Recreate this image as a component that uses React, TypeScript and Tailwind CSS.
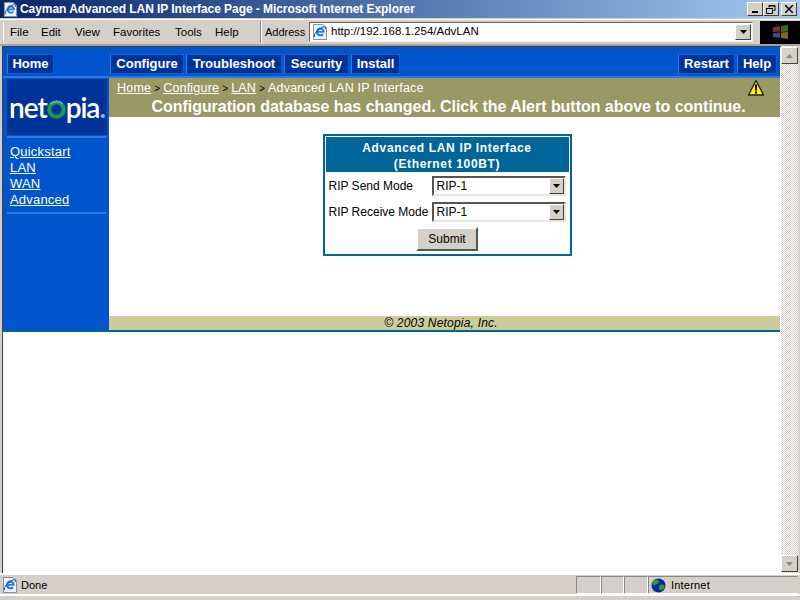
const ui = { fontFamily: 'Tahoma, "DejaVu Sans", sans-serif' }

function IeIcon({ size = 16 }: { size?: number }) {
  return (
    <svg width={size} height={size} viewBox="0 0 16 16" className="shrink-0">
      <path d="M1.500 .5h9l4 3v12h-13z" fill="#eef2f8" stroke="#7f8fb0" strokeWidth="1" />
      <path d="M8 3.500a4.600 4.600 0 0 1 4.600 5.300H6.400c.2 1.700 2.800 2.100 4.800.8v2.100c-3.400 1.500-7.200.2-7.200-3.400C4 5.700 5.800 3.500 8 3.500z" fill="#2a7ad8" />
      <path d="M6.400 7h3.800C10 5.400 6.800 5.300 6.400 7z" fill="#eef2f8" />
      <path d="M2.800 13c-2-2 3-8 8.200-10 2.500-.8 3.200.6 2 2.200" fill="none" stroke="#11489a" strokeWidth="1" />
    </svg>
  )
}

function CaptionButton({ children }: { children: React.ReactNode }) {
  return (
    <div className="w-4 h-[14px] bg-[#d4d0c8] border border-t-white border-l-white border-r-[#404040] border-b-[#404040] flex items-center justify-center">
      {children}
    </div>
  )
}

function DropArrow({ color = '#000' }: { color?: string }) {
  return (
    <svg width="7" height="4" viewBox="0 0 7 4">
      <path d="M0 0h7L3.500 4z" fill={color} />
    </svg>
  )
}

function SelectBox({ value }: { value: string }) {
  return (
    <div className="w-[134px] h-[20px] bg-white border-2 border-t-[#555] border-l-[#555] border-r-[#e8e6e0] border-b-[#e8e6e0] flex items-center justify-between">
      <span className="pl-[3px] text-[12px] text-black">{value}</span>
      <div className="w-[15px] h-[16px] bg-[#d4d0c8] border border-t-white border-l-white border-r-[#404040] border-b-[#404040] flex items-center justify-center">
        <DropArrow />
      </div>
    </div>
  )
}

function NavButton({ label, width }: { label: string; width: string }) {
  return (
    <div className={`h-[20px] ${width} bg-[#003399] border border-t-[#0a5fd0] border-l-[#2a7fe0] border-b-[#0a5fd0] border-r-[#0a5fd0] flex items-center justify-center text-white font-bold text-[13px]`}>
      {label}
    </div>
  )
}

function StatusCell({ width }: { width: string }) {
  return <div className={`${width} h-[18px] border border-t-[#888] border-l-[#888] border-r-white border-b-white`} />
}

export default function App() {
  return (
    <div className="w-[800px] h-[600px] overflow-hidden flex flex-col bg-[#d4d0c8]" style={ui}>
      {/* title bar */}
      <div className="h-[18px] shrink-0 bg-gradient-to-r from-[#0a246a] to-[#a6caf0] flex items-center pl-[3px] pr-[3px]">
        <IeIcon size={15} />
        <span className="ml-[2px] text-white font-bold text-[12px] tracking-[-0.06px] whitespace-nowrap" style={{ fontFamily: '"Liberation Sans", sans-serif' }}>
          Cayman Advanced LAN IP Interface Page - Microsoft Internet Explorer
        </span>
        <div className="ml-auto flex items-center">
          <CaptionButton>
            <div className="w-[6px] h-[2px] bg-black mt-[6px] -ml-[1px]" />
          </CaptionButton>
          <CaptionButton>
            <svg width="10" height="9" viewBox="0 0 10 9" fill="none" stroke="#000">
              <path d="M3 2.500V.5h6v5H7.500" strokeWidth="1" />
              <path d="M.5 3.500h6v5h-6z" strokeWidth="1" />
              <path d="M0 3.500h7M3 1h6" strokeWidth="1" />
            </svg>
          </CaptionButton>
          <div className="ml-[2px]">
            <CaptionButton>
              <svg width="8" height="8" viewBox="0 0 8 8" stroke="#000" strokeWidth="1.5">
                <path d="M0 0l8 8M8 0L0 8" />
              </svg>
            </CaptionButton>
          </div>
        </div>
      </div>

      {/* menu + address bar */}
      <div className="h-[27px] shrink-0 mt-[1px] border-t border-white border-b-2 border-b-[#a8a49c] flex items-center text-[11.5px] text-black pl-[3px]" style={{ fontFamily: '"Liberation Sans", sans-serif' }}>
        <div className="w-[1px] h-[20px] bg-white mr-[6px]" />
        <div className="flex w-[250px] pt-[1px]">
          <span className="w-[31px]">File</span>
          <span className="w-[34px]">Edit</span>
          <span className="w-[38px]">View</span>
          <span className="w-[62px]">Favorites</span>
          <span className="w-[40px]">Tools</span>
          <span>Help</span>
        </div>
        <div className="w-[2px] h-[22px] border-l border-l-[#888] border-r border-r-white" />
        <span className="ml-[3px] w-[44px] text-[11px] pt-[1px]">Address</span>
        <div className="w-[444px] h-[20px] bg-white border border-t-[#666] border-l-[#666] border-r-[#eee] border-b-[#eee] flex items-center pl-[2px]">
          <IeIcon />
          <span className="ml-[3px]">http://192.168.1.254/AdvLAN</span>
          <div className="ml-auto w-[16px] h-[16px] mr-[1px] bg-[#d4d0c8] border border-t-white border-l-white border-r-[#404040] border-b-[#404040] flex items-center justify-center">
            <DropArrow />
          </div>
        </div>
        <div className="ml-[7px] w-[40px] h-[23px] bg-black flex items-center justify-center">
          <svg width="19" height="14" viewBox="0 0 19 14">
            <path d="M2 2l7-1v5.500l-7 .5z" fill="#7a3028" />
            <path d="M10 1l7-1v6.500l-7 .5z" fill="#3c6630" />
            <path d="M2 8l7-.5V13l-7-1z" fill="#34507e" />
            <path d="M10 7.500l7-.5v7l-7-1z" fill="#7a6a28" />
          </svg>
        </div>
      </div>

      {/* browser viewport */}
      <div className="h-[527px] shrink-0 flex pl-[2px]">
        <div className="flex-1 border-l border-t border-[#404040] bg-white min-w-0 pr-[1px]">
          <div className="h-[285px] flex flex-col bg-[#0055cc] border-b-2 border-b-[#006699]" style={{ fontFamily: '"Liberation Sans", sans-serif' }}>
            {/* top nav */}
            <div className="h-[31px] shrink-0 border-b-2 border-[#2a7ae0] pt-[7px] pl-[4px] pr-[3px] flex">
              <NavButton label="Home" width="w-[47px]" />
              <div className="w-[56px]" />
              <div className="flex gap-[2px]">
                <NavButton label="Configure" width="w-[74px]" />
                <NavButton label="Troubleshoot" width="w-[96px]" />
                <NavButton label="Security" width="w-[65px]" />
                <NavButton label="Install" width="w-[49px]" />
              </div>
              <div className="ml-auto flex gap-[2px]">
                <NavButton label="Restart" width="w-[57px]" />
                <NavButton label="Help" width="w-[40px]" />
              </div>
            </div>

            <div className="flex-1 flex min-h-0">
              {/* sidebar */}
              <div className="w-[106px] shrink-0 pl-[4px] pr-[2px]">
                <div className="mt-[1px] h-[56px] bg-[#003399] flex items-center justify-center text-white text-[28px] font-semibold tracking-[-1px]" style={{ fontFamily: 'Lato, sans-serif' }}>
                  <span>net</span>
                  <svg width="19" height="19" viewBox="0 0 19 19" className="mt-[4px] shrink-0">
                    <circle cx="9.500" cy="9.500" r="7.200" fill="none" stroke="#1f9a4a" strokeWidth="4" />
                    <path d="M3.500 4a8.500 8.500 0 0 1 12 0" fill="none" stroke="#6fb8d8" strokeWidth="1.500" />
                  </svg>
                  <span>pia</span>
                  <span className="text-[#a0b0e0]">.</span>
                </div>
                <div className="h-[2px] bg-[#2a7ae0] mt-[1px]" />
                <div className="pt-[6px] pb-[4px] pl-[3px] text-[13px] tracking-[0.2px] leading-[16px] text-white underline">
                  <div>Quickstart</div>
                  <div>LAN</div>
                  <div>WAN</div>
                  <div>Advanced</div>
                </div>
                <div className="h-[2px] bg-[#2a7ae0]" />
              </div>

              {/* main */}
              <div className="flex-1 flex flex-col min-w-0">
                <div className="h-[39px] shrink-0 bg-[#999966] relative pl-[8px] pt-[3px] text-white">
                  <div className="text-[12.5px] leading-[15px] tracking-[0.2px]">
                    <span className="underline">Home</span>
                    <span className="text-black text-[10px]"> &gt; </span>
                    <span className="underline">Configure</span>
                    <span className="text-black text-[10px]"> &gt; </span>
                    <span className="underline">LAN</span>
                    <span className="text-black text-[10px]"> &gt; </span>
                    <span>Advanced LAN IP Interface</span>
                  </div>
                  <div className="text-center font-bold text-[16px] leading-[18px] mt-[2px] tracking-[-0.035px]">
                    Configuration database has changed. Click the Alert button above to continue.
                  </div>
                  <svg width="18" height="18" viewBox="0 0 18 18" className="absolute right-[15px] top-[1px]">
                    <path d="M9 1.500l7.500 14.500h-15z" fill="#ffee00" stroke="#222" strokeWidth="1.300" strokeLinejoin="round" />
                    <path d="M7.800 5.500h2.400l-.5 6.500H8.300z" fill="#000" />
                    <rect x="8" y="12.500" width="2" height="2" fill="#000" />
                  </svg>
                </div>

                <div className="flex-1 bg-white flex justify-center pt-[17px] pl-[5px]">
                  <div className="w-[249px] h-[122px] border-2 border-[#006699] px-[1px] pt-[1px]">
                    <div className="h-[35px] bg-[#006699] text-white text-center font-bold text-[12px] leading-[16px] pt-[3px] tracking-[0.65px]">
                      <div>Advanced LAN IP Interface</div>
                      <div>(Ethernet 100BT)</div>
                    </div>
                    <div className="text-[12px] text-black">
                      <div className="flex items-center justify-between h-[26px] pl-[3px] pr-[3px] pt-[2px]">
                        <span>RIP Send Mode</span>
                        <SelectBox value="RIP-1" />
                      </div>
                      <div className="flex items-center justify-between h-[26px] pl-[3px] pr-[3px] mt-[1px]">
                        <span>RIP Receive Mode</span>
                        <SelectBox value="RIP-1" />
                      </div>
                      <div className="flex justify-center mt-[2px]">
                        <div className="w-[62px] h-[24px] bg-[#d4d0c8] border-2 border-t-white border-l-white border-r-[#555] border-b-[#555] flex items-center justify-center">
                          Submit
                        </div>
                      </div>
                    </div>
                  </div>
                </div>

                <div className="h-[14px] shrink-0 bg-[#cccc99] text-center italic text-[12px] leading-[14px] text-black tracking-[0.2px] pr-[7px]">
                  © 2003 Netopia, Inc.
                </div>
              </div>
            </div>
          </div>
        </div>

        {/* scrollbar */}
        <div className="w-[17px] shrink-0 py-[1px] flex flex-col justify-between bg-[repeating-conic-gradient(#d4d0c8_0_25%,#ffffff_0_50%)] bg-[length:2px_2px]">
          <div className="h-[17px] bg-[#d4d0c8] border border-t-white border-l-white border-r-[#404040] border-b-[#404040] flex items-center justify-center">
            <svg width="7" height="4" viewBox="0 0 7 4"><path d="M0 4h7L3.500 0z" fill="#8a8a8a" /></svg>
          </div>
          <div className="h-[17px] bg-[#d4d0c8] border border-t-white border-l-white border-r-[#404040] border-b-[#404040] flex items-center justify-center">
            <DropArrow color="#8a8a8a" />
          </div>
        </div>
        <div className="w-[2px] shrink-0" />
      </div>

      {/* status bar */}
      <div className="h-[23px] shrink-0 border-t-2 border-t-white border-b-2 border-b-white flex items-start pt-[1px] text-[11px] text-black" style={{ fontFamily: '"Liberation Sans", sans-serif' }}>
        <div className="w-[576px] h-[18px] flex items-center pl-[2px]">
          <IeIcon />
          <span className="ml-[3px]">Done</span>
        </div>
        <div className="flex">
          <StatusCell width="w-[25px]" />
          <StatusCell width="w-[23px]" />
          <StatusCell width="w-[24px]" />
        </div>
        <div className="w-[150px] h-[18px] border border-t-[#888] border-l-[#888] border-r-transparent border-b-white flex items-center pl-[2px]">
          <svg width="15" height="15" viewBox="0 0 15 15">
            <circle cx="7.500" cy="7.500" r="7" fill="#0a2a9c" />
            <path d="M3 2.500c2-1.500 5-1 5 1s-2 2-3 3-3 1-3.500 0 0-3 1.500-4zM9 7c2-1 4-.5 4.500 1s-1 3.500-3 4-3-1-2.500-2.500S8 7.500 9 7z" fill="#2f9a3a" />
          </svg>
          <span className="ml-[5px] tracking-[0.2px]">Internet</span>
        </div>
      </div>
    </div>
  )
}
